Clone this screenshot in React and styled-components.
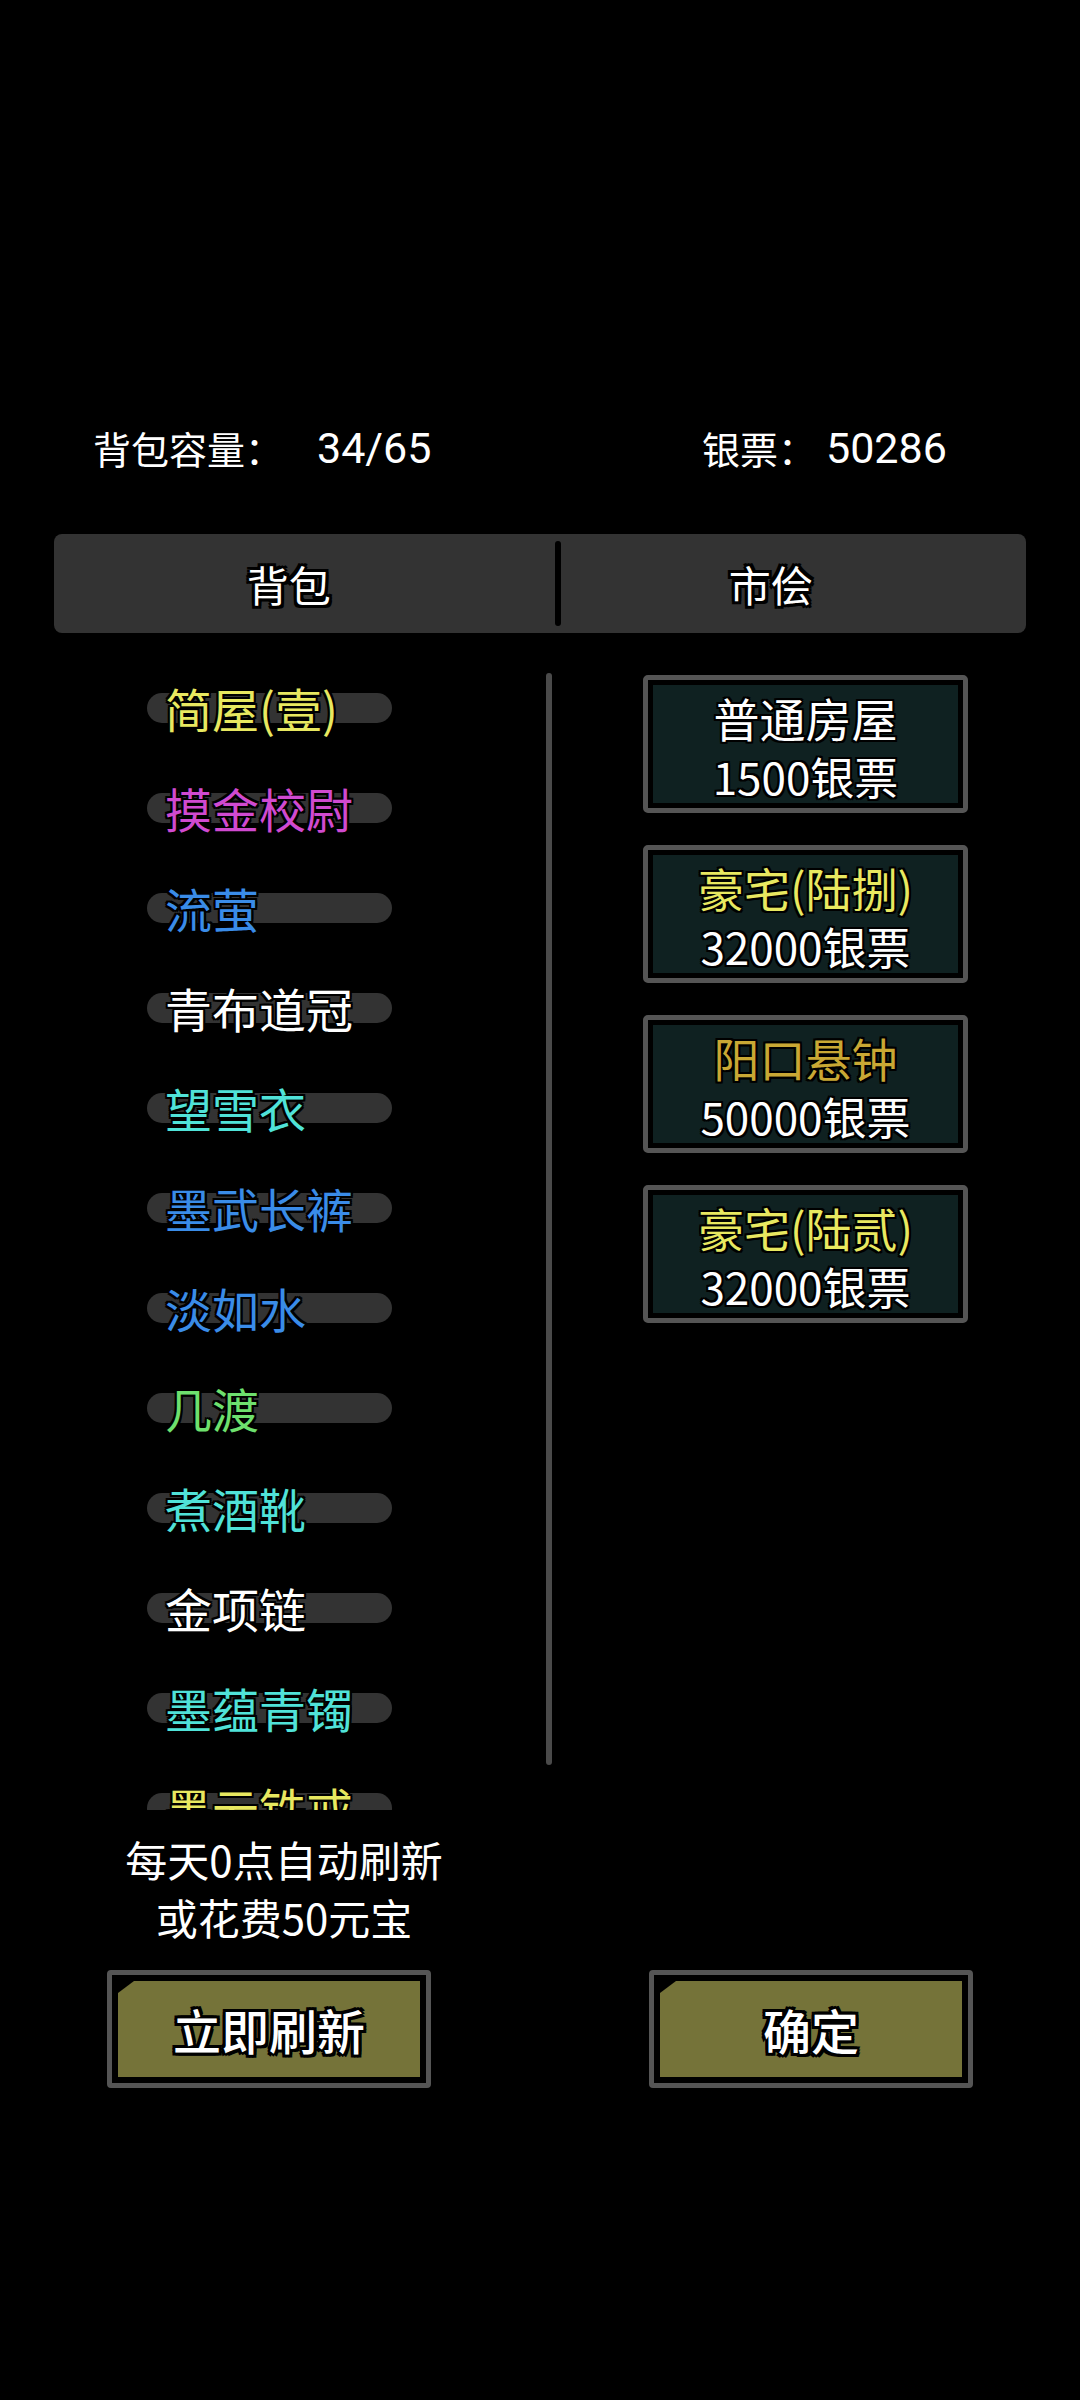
import React from "react";
import styled, { createGlobalStyle } from "styled-components";

const Global = createGlobalStyle`
  html, body { margin: 0; padding: 0; background: #000; }
  body { font-family: "Noto Sans CJK SC", "Noto Sans", sans-serif; color: #fff; }
`;

const outline = (w) => `
  text-shadow: ${w}px 0 #000, -${w}px 0 #000, 0 ${w}px #000, 0 -${w}px #000,
    ${w}px ${w}px #000, -${w}px -${w}px #000, ${w}px -${w}px #000, -${w}px ${w}px #000;
`;

const Page = styled.div`
  width: 1080px;
  height: 2400px;
  background: #000;
  padding-top: 421px;
  box-sizing: border-box;
  overflow: hidden;
`;

const Header = styled.div`
  display: grid;
  grid-template-columns: 609px 1fr;
  padding-left: 93px;
  height: 54px;
  align-items: center;
`;

const HeaderItem = styled.div`
  display: flex;
  align-items: center;
  white-space: nowrap;
`;

const HeaderLabel = styled.span`
  font-size: 38px;
  line-height: 54px;
  color: #fff;
`;

const HeaderValue = styled.span`
  font-family: Roboto, "Noto Sans", sans-serif;
  font-size: 43px;
  line-height: 54px;
  margin-left: ${(p) => p.$ml}px;
  color: #fff;
`;

const Tabs = styled.div`
  margin: 59px 54px 0;
  height: 99px;
  background: #333;
  border-radius: 8px;
  display: flex;
  align-items: center;
`;

const Tab = styled.div`
  width: ${(p) => p.$w}px;
  padding-right: ${(p) => p.$pr}px;
  box-sizing: border-box;
  text-align: center;
  font-size: 42px;
  line-height: 99px;
  color: #fff;
  ${outline(3)}
`;

const Divider = styled.div`
  width: 6px;
  height: 85px;
  border-radius: 3px;
  background: #000;
`;

const Content = styled.div`
  margin-top: 25px;
  display: flex;
`;

const LeftCol = styled.div`
  display: flex;
  width: 552px;
`;

const ListViewport = styled.div`
  width: 546px;
  height: 1152px;
  overflow: hidden;
`;

const Item = styled.div`
  height: 100px;
  display: flex;
  align-items: center;
  padding-left: 147px;
`;

const Pill = styled.div`
  width: 245px;
  height: 30px;
  border-radius: 15px;
  background: #333;
  display: flex;
  align-items: center;
  padding-left: 18px;
  box-sizing: border-box;
  white-space: nowrap;
`;

const ItemName = styled.span`
  font-size: 47px;
  line-height: 60px;
  color: ${(p) => p.$c};
  ${outline(2)}
`;

const Scrollbar = styled.div`
  width: 6px;
  height: 1092px;
  margin-top: 15px;
  border-radius: 3px;
  background: #4a4a4a;
`;

const Market = styled.div`
  margin-left: 91px;
  margin-top: 17px;
  display: flex;
  flex-direction: column;
  gap: 32px;
`;

const Card = styled.div`
  width: 325px;
  height: 138px;
  box-sizing: border-box;
  border: 5px solid #555;
  border-radius: 5px;
  background: #000;
  padding: 5px;
`;

const CardInner = styled.div`
  height: 100%;
  background: #0f2121;
  display: flex;
  flex-direction: column;
  align-items: center;
  padding-top: 3px;
  box-sizing: border-box;
`;

const CardTitle = styled.div`
  font-size: 46px;
  line-height: 58px;
  color: ${(p) => p.$c};
  ${outline(2)}
`;

const CardPrice = styled.div`
  font-size: 44px;
  line-height: 60px;
  color: #fff;
  ${outline(2)}
`;

const Note = styled.div`
  width: 568px;
  margin-top: 20px;
  text-align: center;
  font-size: 42px;
  line-height: 58px;
  color: #fff;
`;

const Buttons = styled.div`
  display: flex;
  margin-top: 24px;
  padding-left: 107px;
  gap: 218px;
`;

const Button = styled.div`
  width: 324px;
  height: 118px;
  box-sizing: border-box;
  border: 5px solid #555;
  border-radius: 4px;
  background: #000;
  padding: 6px;
`;

const ButtonFace = styled.div`
  height: 100%;
  background: #757339;
  clip-path: polygon(16px 0, 100% 0, 100% 100%, 0 100%, 0 12px);
  display: flex;
  align-items: center;
  justify-content: center;
  font-size: 48px;
  font-weight: 500;
  color: #fff;
  ${outline(3)}
`;

const items = [
  ["简屋(壹)", "#e8e860"],
  ["摸金校尉", "#d04ad0"],
  ["流萤", "#3a8ce8"],
  ["青布道冠", "#ffffff"],
  ["望雪衣", "#50e2d8"],
  ["墨武长裤", "#3a8ce8"],
  ["淡如水", "#3a8ce8"],
  ["几渡", "#6ee06e"],
  ["煮酒靴", "#50e2d8"],
  ["金项链", "#ffffff"],
  ["墨蕴青镯", "#50e2d8"],
  ["墨云铁戒", "#e8e860"],
];

const market = [
  ["普通房屋", "#ffffff", "1500银票"],
  ["豪宅(陆捌)", "#e8e860", "32000银票"],
  ["阳口悬钟", "#c9a834", "50000银票"],
  ["豪宅(陆贰)", "#e8e860", "32000银票"],
];

export default function App() {
  return (
    <Page>
      <Global />
      <Header>
        <HeaderItem>
          <HeaderLabel>背包容量：</HeaderLabel>
          <HeaderValue $ml={34}>34/65</HeaderValue>
        </HeaderItem>
        <HeaderItem>
          <HeaderLabel>银票：</HeaderLabel>
          <HeaderValue $ml={10}>50286</HeaderValue>
        </HeaderItem>
      </Header>
      <Tabs>
        <Tab $w={503} $pr={32}>背包</Tab>
        <Divider />
        <Tab $w={466} $pr={46}>市侩</Tab>
      </Tabs>
      <Content>
        <LeftCol>
          <ListViewport>
            {items.map(([name, c]) => (
              <Item key={name}>
                <Pill>
                  <ItemName $c={c}>{name}</ItemName>
                </Pill>
              </Item>
            ))}
          </ListViewport>
          <Scrollbar />
        </LeftCol>
        <Market>
          {market.map(([t, c, p]) => (
            <Card key={t}>
              <CardInner>
                <CardTitle $c={c}>{t}</CardTitle>
                <CardPrice>{p}</CardPrice>
              </CardInner>
            </Card>
          ))}
        </Market>
      </Content>
      <Note>
        每天0点自动刷新
        <br />
        或花费50元宝
      </Note>
      <Buttons>
        <Button>
          <ButtonFace>立即刷新</ButtonFace>
        </Button>
        <Button>
          <ButtonFace>确定</ButtonFace>
        </Button>
      </Buttons>
    </Page>
  );
}
